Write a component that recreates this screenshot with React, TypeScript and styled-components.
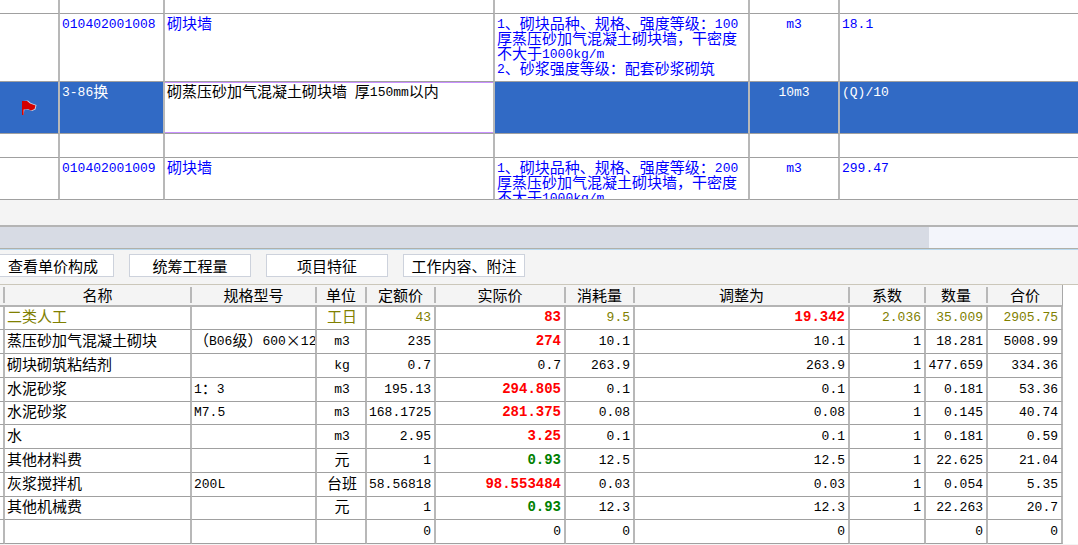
import React from "react";
import styled, { createGlobalStyle, css } from "styled-components";

const Global = createGlobalStyle`
  * { box-sizing: border-box; }
  body {
    margin: 0;
    background: #f4f4f4;
    color: #000;
    font-family: "Noto Sans CJK SC", "Noto Sans", sans-serif;
    font-size: 15px;
    line-height: 15px;
  }
`;

const Page = styled.main`
  display: flex;
  flex-direction: column;
  overflow: hidden;
`;

const Latin = styled.span<{ $strong?: boolean }>`
  font-family: "Liberation Mono", monospace;
  font-size: ${(p) => (p.$strong ? 14 : 13)}px;
  font-weight: ${(p) => (p.$strong ? 700 : 400)};
  line-height: 0;
  vertical-align: 1px;
`;

/* Sets half-width runs in the monospaced face, the rest in the CJK face. */
function Mixed({ text, strong }: { text: string; strong?: boolean }) {
  return (
    <>
      {text.split(/([\x20-\x7e]+)/).map((part, i) =>
        i % 2 ? (
          <Latin key={i} $strong={strong}>
            {part}
          </Latin>
        ) : (
          part
        )
      )}
    </>
  );
}

const Grid = styled.table`
  width: 100%;
  table-layout: fixed;
  border-collapse: separate;
  border-spacing: 0;
  background: #fff;
`;

const Col = styled.col<{ $w?: number }>`
  width: ${(p) => (p.$w ? `${p.$w}px` : "auto")};
`;

/* ---------- bill of quantities ---------- */

const BillRow = styled.tr<{ $h: number; $selected?: boolean }>`
  height: ${(p) => p.$h}px;
  color: #00f;
  ${(p) =>
    p.$selected &&
    css`
      background: #316ac5;
      color: #fff;
    `}
`;

const BillCell = styled.td<{ $center?: boolean; $editing?: boolean }>`
  padding: 1px 2px 0;
  vertical-align: top;
  text-align: ${(p) => (p.$center ? "center" : "left")};
  border-right: 2px solid #b8b8b8;
  border-bottom: 1px solid #a0a0a0;
  &:last-child {
    border-right: 0;
  }
  ${(p) =>
    p.$editing &&
    css`
      background: #fff;
      color: #000;
      box-shadow: inset 0 1px 0 0 #c890ff, inset 0 -1px 0 0 #c890ff;
    `}
`;

const Lines = styled.div<{ $max?: number }>`
  white-space: pre;
  ${(p) => p.$max && `max-height: ${p.$max}px; overflow: hidden;`}
`;

const FlagBox = styled.div`
  display: flex;
  justify-content: center;
  padding-top: 17px;
`;

function Flag() {
  return (
    <FlagBox>
      <svg width="16" height="16" viewBox="0 0 16 16" aria-label="flag">
        <path d="M2 1 L7 .5 L10 3 L15.500 5 L14.500 9.500 L11 11 L7 9.500 L3.500 9.500 L2.500 15 L1 15 Z" fill="#c9d2e6" />
        <path d="M1 1 L6 1 L9 3.500 L14.500 5.500 L13.500 9 L10 10.500 L7 9 L2.600 9.500 L2.600 15 L1 15 Z" fill="#d40000" />
      </svg>
    </FlagBox>
  );
}

interface Bill {
  h: number;
  selected?: boolean;
  code?: string;
  name?: string;
  feature?: string;
  unit?: string;
  qty?: string;
  max?: number;
}

const bills: Bill[] = [
  { h: 14 },
  {
    h: 68,
    code: "010402001008",
    name: "砌块墙",
    feature: "1、砌块品种、规格、强度等级：100\n厚蒸压砂加气混凝土砌块墙，干密度\n不大于1000kg/m\n2、砂浆强度等级：配套砂浆砌筑",
    unit: "m3",
    qty: "18.1",
  },
  {
    h: 52,
    selected: true,
    code: "3-86换",
    name: "砌蒸压砂加气混凝土砌块墙 厚150mm以内",
    unit: "10m3",
    qty: "(Q)/10",
  },
  { h: 24 },
  {
    h: 42,
    code: "010402001009",
    name: "砌块墙",
    feature: "1、砌块品种、规格、强度等级：200\n厚蒸压砂加气混凝土砌块墙，干密度\n不大于1000kg/m",
    unit: "m3",
    qty: "299.47",
    max: 40,
  },
];

/* ---------- scroll bar and buttons ---------- */

const Strip = styled.div`
  height: 25px;
  background: #f4f4f4;
`;

const ScrollTrack = styled.div`
  height: 24px;
  padding-right: 149px;
  background: #f3f5fb;
  border-top: 2px solid #b4b4b4;
  border-bottom: 1px solid #b0b0a8;
`;

const ScrollThumb = styled.div`
  height: 100%;
  background: #d7dbe4;
`;

const Toolbar = styled.div`
  display: flex;
  gap: 15px;
  height: 36px;
  padding: 4px 0 0 0;
  background: #f4f4f4;
  border-top: 1px solid #b8d8ee;
  border-bottom: 1px solid #cbc7ba;
`;

const ToolButton = styled.button`
  flex: none;
  width: 122px;
  height: 23px;
  padding: 0;
  font: inherit;
  color: #000;
  background: #fff;
  border: 1px solid #cdd2dc;
  &:first-child {
    margin-left: -8px;
  }
`;

/* ---------- resource details ---------- */

const DetailPane = styled.div`
  padding-right: 15px;
  background: #fff;
`;

const HeadCell = styled.th`
  padding: 2px 0;
  font-weight: 400;
  background: #f4f4f4;
  border-bottom: 2px solid #b4b4b4;
  &:last-child {
    border-right: 1px solid #a8a8a8;
  }
  &:last-child > span {
    border-right: 0;
  }
`;

const HeadLabel = styled.span`
  display: block;
  height: 16px;
  line-height: 16px;
  border-right: 2px solid #b8b8b8;
`;

const DetailRow = styled.tr<{ $labor?: boolean }>`
  height: 24px;
  color: ${(p) => (p.$labor ? "#808000" : "#000")};
  &:nth-child(4n + 1) {
    height: 23px;
  }
`;

type Align = "left" | "center" | "right";
type Tone = "up" | "down";

const tones = { up: "#f00", down: "#008000" };

const DetailCell = styled.td<{ $align: Align; $tone?: Tone }>`
  padding: 0 ${(p) => (p.$align === "right" ? 3 : 0)}px 4px 2px;
  text-align: ${(p) => p.$align};
  white-space: nowrap;
  overflow: hidden;
  border-right: 2px solid #b8b8b8;
  border-bottom: 1px solid #a0a0a0;
  ${(p) => p.$tone && `color: ${tones[p.$tone]};`}
`;

const Clip = styled.div`
  overflow: hidden;
  line-height: 18px;
`;

const columns: { label: string; width?: number; align: Align }[] = [
  { label: "", width: 5, align: "left" },
  { label: "名称", width: 187, align: "left" },
  { label: "规格型号", width: 125, align: "left" },
  { label: "单位", width: 50, align: "center" },
  { label: "定额价", width: 69, align: "right" },
  { label: "实际价", width: 130, align: "right" },
  { label: "消耗量", width: 69, align: "right" },
  { label: "调整为", align: "right" },
  { label: "系数", width: 76, align: "right" },
  { label: "数量", width: 62, align: "right" },
  { label: "合价", width: 75, align: "right" },
];

interface Detail {
  cells: string[];
  labor?: boolean;
  tone?: Record<number, Tone>;
}

const details: Detail[] = [
  { cells: ["", "二类人工", "", "工日", "43", "83", "9.5", "19.342", "2.036", "35.009", "2905.75"], labor: true, tone: { 5: "up", 7: "up" } },
  { cells: ["", "蒸压砂加气混凝土砌块", "（B06级）600×12", "m3", "235", "274", "10.1", "10.1", "1", "18.281", "5008.99"], tone: { 5: "up" } },
  { cells: ["", "砌块砌筑粘结剂", "", "kg", "0.7", "0.7", "263.9", "263.9", "1", "477.659", "334.36"] },
  { cells: ["", "水泥砂浆", "1：3", "m3", "195.13", "294.805", "0.1", "0.1", "1", "0.181", "53.36"], tone: { 5: "up" } },
  { cells: ["", "水泥砂浆", "M7.5", "m3", "168.1725", "281.375", "0.08", "0.08", "1", "0.145", "40.74"], tone: { 5: "up" } },
  { cells: ["", "水", "", "m3", "2.95", "3.25", "0.1", "0.1", "1", "0.181", "0.59"], tone: { 5: "up" } },
  { cells: ["", "其他材料费", "", "元", "1", "0.93", "12.5", "12.5", "1", "22.625", "21.04"], tone: { 5: "down" } },
  { cells: ["", "灰浆搅拌机", "200L", "台班", "58.568187", "98.553484", "0.03", "0.03", "1", "0.054", "5.35"], tone: { 5: "up" } },
  { cells: ["", "其他机械费", "", "元", "1", "0.93", "12.3", "12.3", "1", "22.263", "20.7"], tone: { 5: "down" } },
  { cells: ["", "", "", "", "0", "0", "0", "0", "", "0", "0"] },
];

export default function App() {
  return (
    <Page>
      <Global />
      <Grid>
        <colgroup>
          <Col $w={60} />
          <Col $w={105} />
          <Col $w={330} />
          <Col $w={255} />
          <Col $w={90} />
          <Col />
        </colgroup>
        <tbody>
          {bills.map((b, i) => (
            <BillRow key={i} $h={b.h} $selected={b.selected}>
              <BillCell>{b.selected && <Flag />}</BillCell>
              <BillCell>{b.code && <Mixed text={b.code} />}</BillCell>
              <BillCell $editing={b.selected}>{b.name && <Mixed text={b.name} />}</BillCell>
              <BillCell>
                {b.feature && (
                  <Lines $max={b.max}>
                    {b.feature.split("\n").map((line) => (
                      <div key={line}>
                        <Mixed text={line} />
                      </div>
                    ))}
                  </Lines>
                )}
              </BillCell>
              <BillCell $center>{b.unit && <Mixed text={b.unit} />}</BillCell>
              <BillCell>{b.qty && <Mixed text={b.qty} />}</BillCell>
            </BillRow>
          ))}
        </tbody>
      </Grid>
      <Strip />
      <ScrollTrack>
        <ScrollThumb />
      </ScrollTrack>
      <Toolbar>
        <ToolButton type="button">查看单价构成</ToolButton>
        <ToolButton type="button">统筹工程量</ToolButton>
        <ToolButton type="button">项目特征</ToolButton>
        <ToolButton type="button">工作内容、附注</ToolButton>
      </Toolbar>
      <DetailPane>
        <Grid>
          <colgroup>
            {columns.map((c, i) => (
              <Col key={i} $w={c.width} />
            ))}
          </colgroup>
          <thead>
            <tr>
              {columns.map((c, i) => (
                <HeadCell key={i} scope="col">
                  <HeadLabel>{c.label}</HeadLabel>
                </HeadCell>
              ))}
            </tr>
          </thead>
          <tbody>
            {details.map((d, r) => (
              <DetailRow key={r} $labor={d.labor}>
                {d.cells.map((text, i) => (
                  <DetailCell key={i} $align={columns[i].align} $tone={d.tone?.[i]}>
                    <Clip>
                      <Mixed text={text} strong={!!d.tone?.[i]} />
                    </Clip>
                  </DetailCell>
                ))}
              </DetailRow>
            ))}
          </tbody>
        </Grid>
      </DetailPane>
    </Page>
  );
}
